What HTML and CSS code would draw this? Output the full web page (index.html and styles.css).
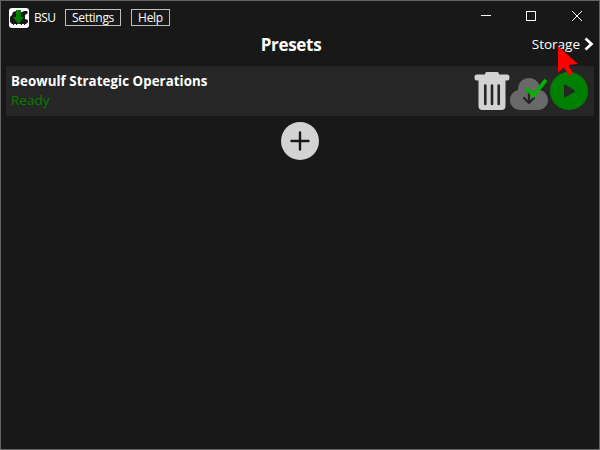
FILE: index.html
```
<!DOCTYPE html>
<html lang="en">
<head>
<meta charset="utf-8">
<title>BSU</title>
<link rel="stylesheet" href="styles.css">
</head>
<body>
<div class="window">
  <header class="titlebar">
    <svg class="logo" width="20" height="20" viewBox="0 0 20 20">
      <rect width="20" height="20" rx="3" fill="#fff"/>
      <path d="M4 4l3-1 1 1h5l2-1h3l1 2-3 2v4l3 1v2l-2 2H3l-2-2V9l2-2z" fill="#171717"/>
      <path d="M4 16.500h1M7 16.500h1M12 16.500h1M15 16.500h1" stroke="#171717"/>
      <path d="M7 2h5v7h3l-5.500 7L4 9h3z" fill="#008000"/>
    </svg>
    <span class="app-name">BSU</span>
    <button class="menu settings"><span>Settings</span></button>
    <button class="menu help"><span>Help</span></button>
    <svg class="controls" width="104" height="12" viewBox="0 0 104 12" fill="none" stroke="#fff">
      <path d="M1 5.500h10"/>
      <rect x="46.500" y="1.500" width="9" height="9"/>
      <path d="M92 1l10 10M102 1L92 11"/>
    </svg>
  </header>
  <nav class="heading">
    <h1><span>Presets</span></h1>
    <a class="storage"><span>Storage</span>
      <svg width="10" height="14" viewBox="0 0 10 14"><path d="M1.500 1.500L7.500 7l-6 5.500" fill="none" stroke="#fff" stroke-width="2.700"/></svg>
    </a>
  </nav>
  <main>
    <section class="preset">
      <div class="info">
        <div class="name"><span>Beowulf Strategic Operations</span></div>
        <div class="status"><span>Ready</span></div>
      </div>
      <div class="actions">
        <svg width="36" height="40" viewBox="0 0 36 40">
          <path d="M11 3.500V3q0-2 2-2h10q2 0 2 2v.500h8q2.500 0 2.500 2.500v1q0 2.500-2.500 2.500h-1.500V35q0 4-4 4h-19q-4 0-4-4V9.500H3Q.5 9.500.5 7V6Q.5 3.500 3 3.500z" fill="#d3d3d3"/>
          <path d="M11.300 14.500v18.500M18 14.500v18.500M24.700 14.500v18.500" stroke="#262626" stroke-width="2.600" stroke-linecap="round"/>
        </svg>
        <svg width="38" height="40" viewBox="0 0 38 40">
          <path d="M10.500 39C4 39 0 34.500 0 29c0-5 3.500-9 8-10C7.500 12.500 12.500 7 19 7s11.500 5.500 11 12c4.500 1 8 5 8 10 0 5.500-4 10-10.500 10z" fill="#696969"/>
          <path d="M19 20v12M14 27l5 5 5-5" fill="none" stroke="#262626" stroke-width="2.300" stroke-linecap="round" stroke-linejoin="round"/>
          <path d="M16 17l7.500 7.500L36 9" fill="none" stroke="#00b400" stroke-width="3.800"/>
        </svg>
        <svg width="38" height="40" viewBox="0 0 38 40">
          <circle cx="19" cy="20" r="19" fill="#008000"/>
          <path d="M15 14.500v11l9-5.500z" fill="#262626" stroke="#262626" stroke-width="2" stroke-linejoin="round"/>
        </svg>
      </div>
    </section>
    <button class="add" aria-label="Add">
      <svg width="38" height="38" viewBox="0 0 38 38">
        <circle cx="19" cy="19" r="19" fill="#d3d3d3"/>
        <path d="M19 10.500v17M10.500 19h17" stroke="#181818" stroke-width="2.400" stroke-linecap="round"/>
      </svg>
    </button>
  </main>
  <svg class="cursor" width="22" height="31" viewBox="0 0 22 31"><path d="M1 1v26.500L7 22.500l5 8 4-2-4.500-8.500 9.500-1z" fill="#f00"/></svg>
</div>
</body>
</html>
```
FILE: styles.css
```
* { box-sizing: border-box; }
body { margin: 0; background: #181818; color: #fff; font-family: "Open Sans", "Noto Sans", sans-serif; }
button { background: none; border: 0; padding: 0; color: inherit; font: inherit; }
svg { display: block; flex: none; }
span { white-space: nowrap; }
.window { position: relative; width: 600px; height: 450px; border: 1px solid #646464; background: #181818; overflow: hidden; }
.titlebar { display: flex; align-items: center; height: 32px; padding: 0 15px 0 8px; font-size: 12px; }
.logo { margin-top: 2px; }
.app-name { margin-left: 5px; width: 31px; letter-spacing: -0.6px; }
.menu { display: flex; align-items: center; justify-content: center; height: 17px; border: 1px solid #bebebe; line-height: 15px; letter-spacing: -0.3px; }
.settings { width: 56px; }
.help { width: 39px; margin-left: 10px; }
.controls { margin-left: auto; margin-top: -3px; }
.heading { display: grid; grid-template-columns: 1fr auto 1fr; align-items: center; height: 24px; margin-bottom: 9px; padding-right: 18px; }
.heading h1 { grid-column: 2; margin: 0; font-size: 17px; line-height: 24px; font-weight: 700; letter-spacing: -0.3px; }
.storage { display: flex; align-items: center; justify-content: flex-end; gap: 4px; margin-right: -13px; font-size: 13.500px; line-height: 22px; padding-bottom: 2px; }
.preset { display: flex; justify-content: space-between; height: 50px; margin: 0 5px; padding: 5px 6px 5px 5px; background: #262626; }
.name { font-size: 13.300px; font-weight: 700; line-height: 20px; letter-spacing: 0.060px; }
.status { font-size: 13.500px; line-height: 19px; color: #008000; }
.actions { display: flex; gap: 2px; }
.actions svg:first-child { margin-right: -2px; }
.add { display: block; margin: 6px auto 0; }
.cursor { position: absolute; left: 556px; top: 44px; }
```
